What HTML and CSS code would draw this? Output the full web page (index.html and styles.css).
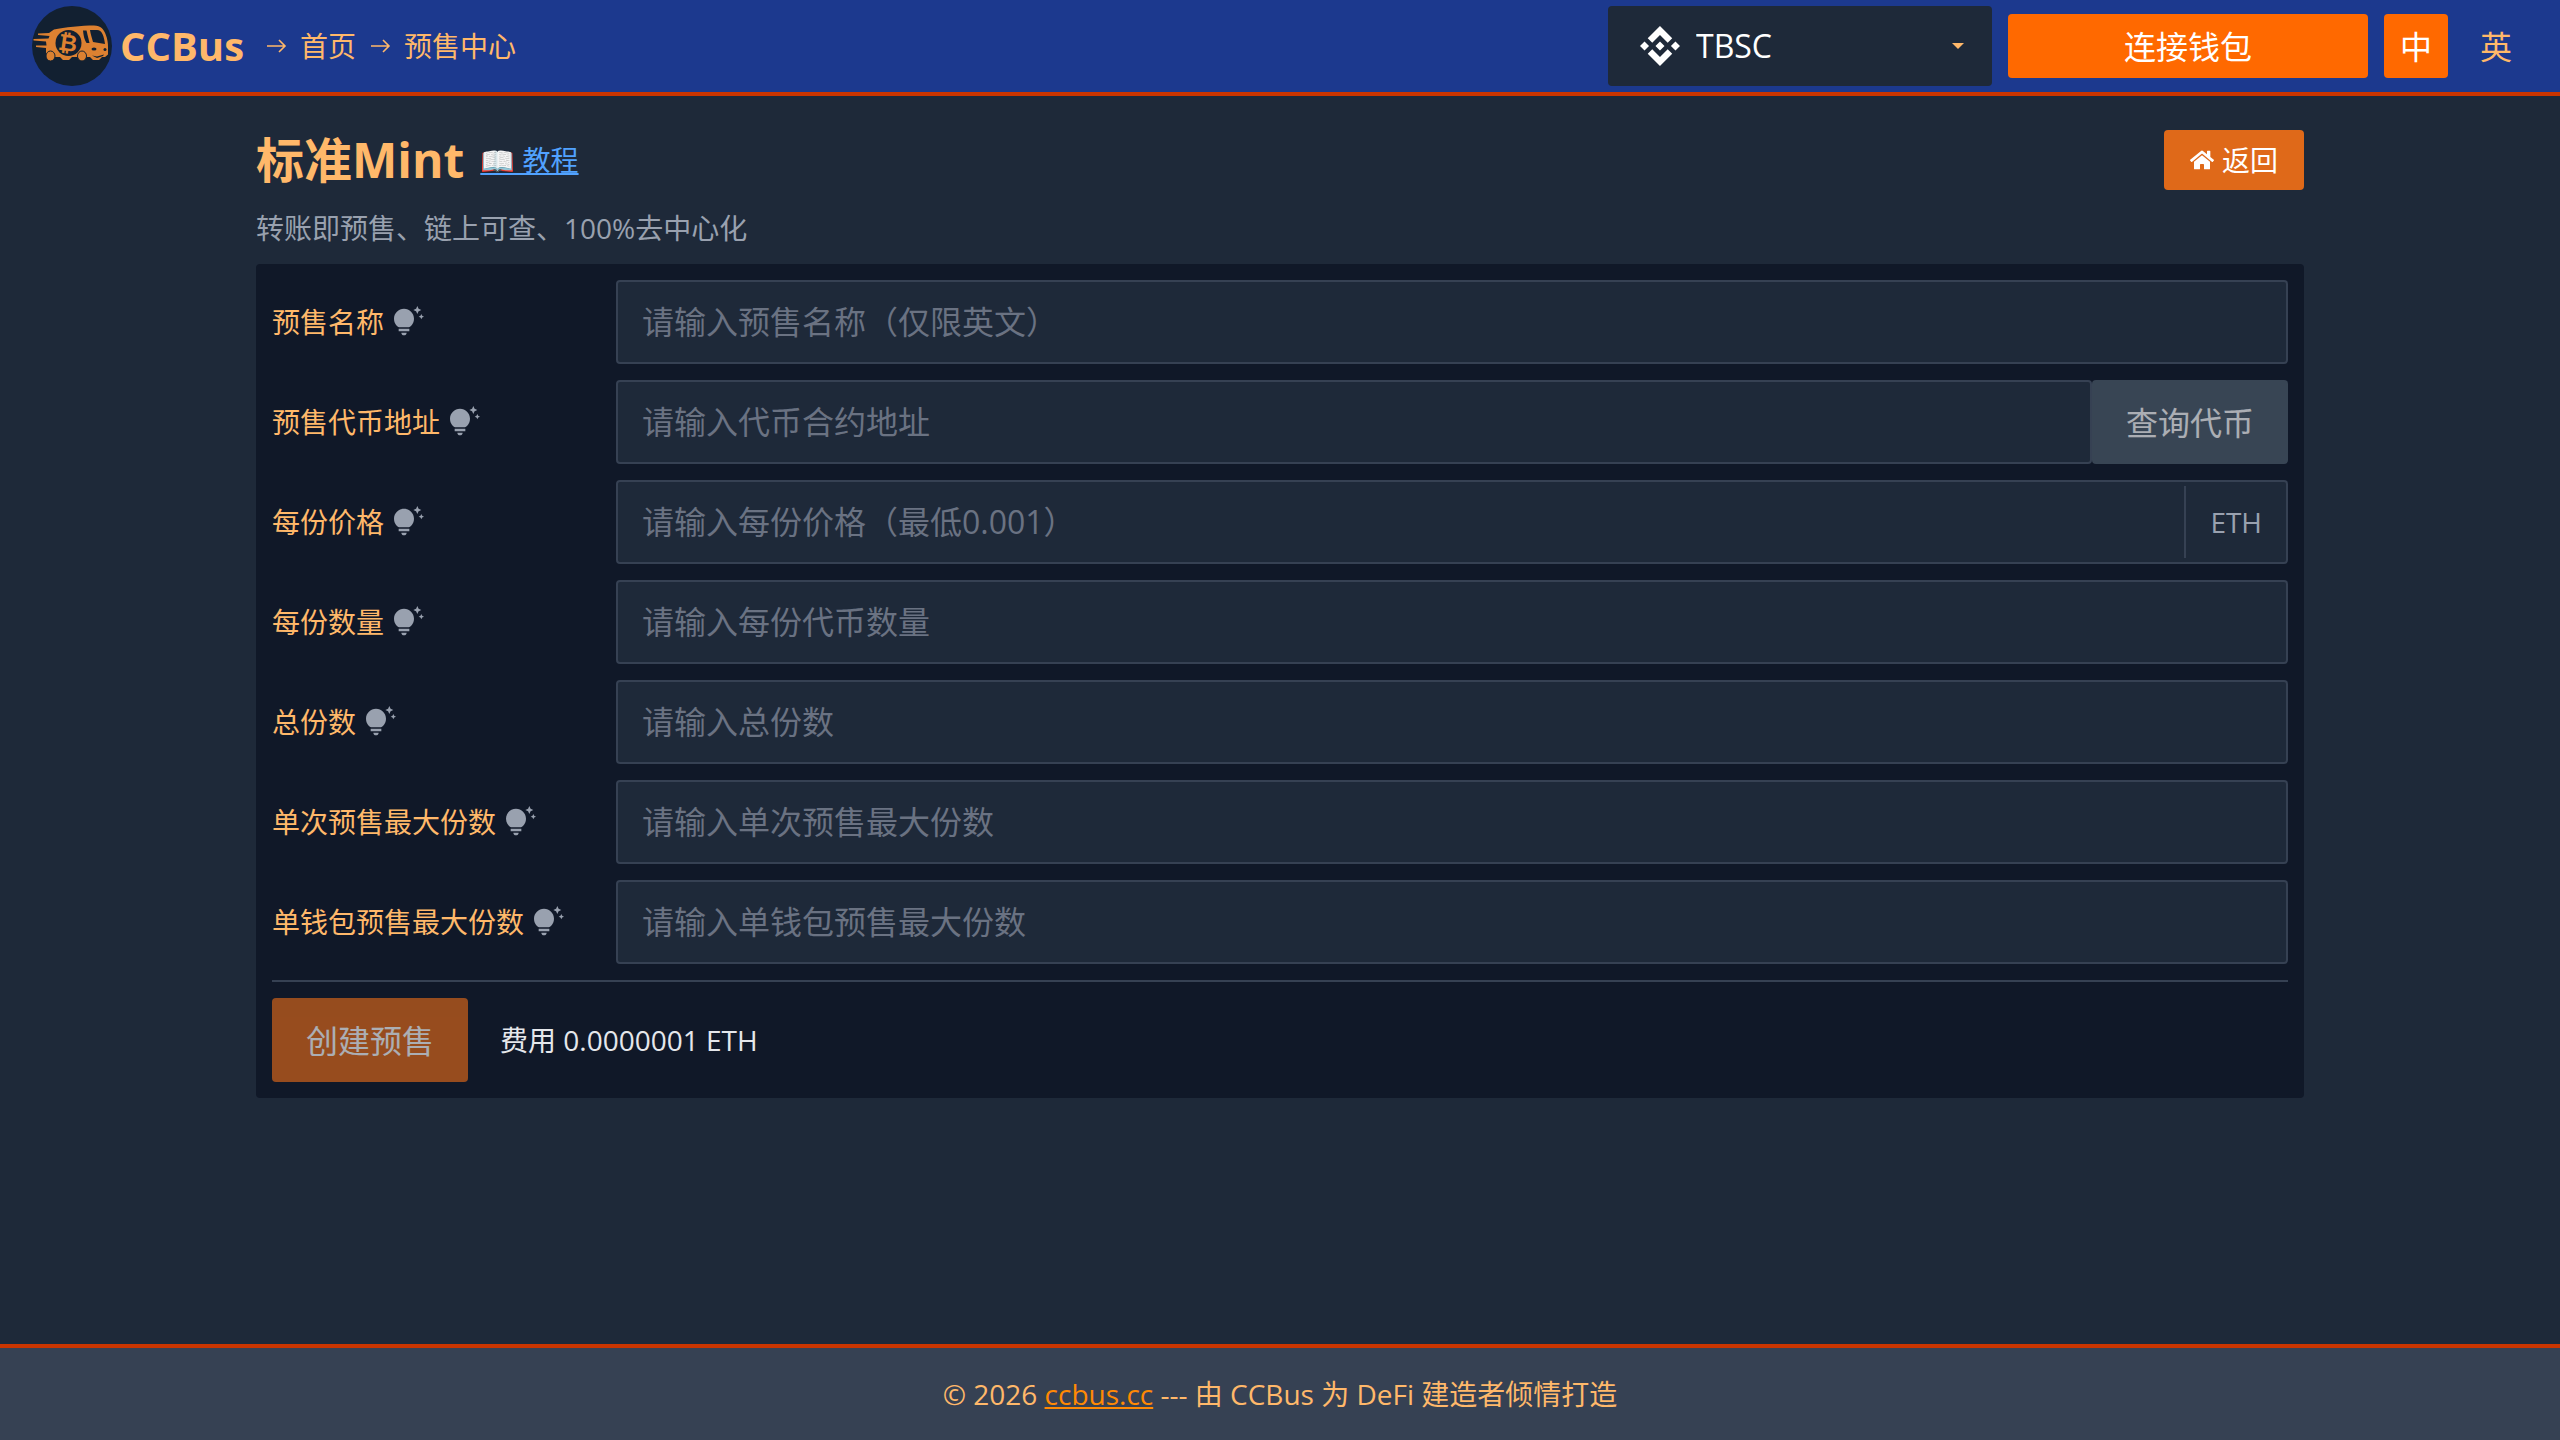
FILE: index.html
```html
<!DOCTYPE html>
<html lang="zh-CN">
<head>
    <meta charset="UTF-8">
    <meta name="viewport" content="width=device-width, initial-scale=1.0">
    <title>标准Mint - CCBus</title>
    <link rel="stylesheet" href="styles.css">
</head>
<body>
    <!-- 图标 -->
    <svg class="sprite" aria-hidden="true">
        <symbol id="icon-tip" viewBox="0 0 24 24">
            <path d="M7 20h4c0 1.1-.9 2-2 2s-2-.9-2-2zm-2-1h8v-2H5v2zm11.5-9.5c0 3.82-2.66 5.86-3.77 6.5H5.27c-1.11-.64-3.77-2.68-3.77-6.5C1.5 5.36 4.86 2 9 2s7.5 3.36 7.5 7.5zm4.87-2.13L20 8l1.37.63L22 10l.63-1.37L24 8l-1.37-.63L22 6l-.63 1.37zM19 6l.94-2.06L22 3l-2.06-.94L19 0l-.94 2.06L16 3l2.06.94L19 6z"/>
        </symbol>
        <symbol id="icon-arrow" viewBox="0 0 24 24">
            <path d="M3 12h17M15 6l6 6-6 6" fill="none" stroke="currentColor" stroke-width="1.6"/>
        </symbol>
    </svg>

    <!-- 顶部导航 -->
    <header class="header">
        <nav class="breadcrumb">
            <a href="#" class="brand">
                <svg class="logo" viewBox="0 0 80 80" aria-hidden="true">
                    <circle cx="40" cy="40" r="40" fill="#122031"/>
                    <g fill="#dd8131">
                        <path d="M6 27.500l11-.5 5-3.500c10-2 28-4 40-4 7 0 9.500 4 11.500 8.500 2 5 2.500 9 2.500 13v7.500l-3 2.500h-3l-3 3h-6l-3-3H40l-3 3h-6l-3-3H15.500L14 48v-6l-10-1v-1.500h10.500l-.5-4-12.500-1V33l15-.5 1-2.500-11.500-1z"/>
                        <ellipse cx="18.500" cy="50" rx="4.500" ry="5" stroke="#122031"/>
                        <ellipse cx="50" cy="50" rx="4.500" ry="5" stroke="#122031"/>
                    </g>
                    <g fill="#122031">
                        <circle cx="36.500" cy="37" r="13"/>
                        <path d="M51 24.500h3.500l3 12.500h-3c-2-3-3-7-3.500-12.500z"/>
                        <path d="M58 24h7c5 0 7 6 8 14l-12-2c-1-4-2.500-8-3-12z"/>
                        <ellipse cx="62" cy="43" rx="2.500" ry="1.500"/>
                        <ellipse cx="73" cy="43.500" rx="1.500" ry="1.500"/>
                        <path d="M60 49.500l5 1 7-2-1 1.500-6 2z"/>
                    </g>
                    <text class="logo-coin" x="36" y="45" transform="rotate(8 36 37)">₿</text>
                </svg>
                <span class="brand-name">CCBus</span>
            </a>
            <svg class="arrow"><use href="#icon-arrow"/></svg>
            <a href="#" class="crumb">首页</a>
            <svg class="arrow"><use href="#icon-arrow"/></svg>
            <a href="#" class="crumb">预售中心</a>
        </nav>
        <div class="header-actions">
            <div class="chain">
                <svg class="chain-icon" viewBox="0 0 24 24" aria-hidden="true">
                    <path d="M16.624 13.9202l2.7175 2.7154-7.353 7.353-7.353-7.352 2.7175-2.7164 4.6355 4.6595 4.6356-4.6595zm4.6366-4.6366L24 12l-2.7154 2.7164L18.5682 12l2.6924-2.7164zm-9.272.001l2.7163 2.6914-2.7164 2.7174v-.001L9.2721 12l2.7164-2.7154zm-9.2722-.001L5.4088 12l-2.6914 2.6924L0 12l2.7164-2.7164zM11.9885.0115l7.353 7.329-2.7174 2.7154-4.6356-4.6356-4.6355 4.6595-2.7174-2.7154 7.353-7.353z"/>
                </svg>
                <select class="chain-select" aria-label="网络">
                    <option>TBSC</option>
                </select>
                <svg class="chain-caret" viewBox="0 0 12 6" aria-hidden="true"><path d="M0 0h12L6 6z"/></svg>
            </div>
            <button type="button" class="connect-btn">连接钱包</button>
            <button type="button" class="lang-btn active">中</button>
            <button type="button" class="lang-btn">英</button>
        </div>
    </header>

    <!-- 主要内容 -->
    <main class="main-content">
        <div class="title-row">
            <h1 class="page-title">标准Mint</h1>
            <a href="#" class="guide-link">📖 教程</a>
            <a href="#" class="back-btn">
                <svg class="home-icon" viewBox="0 0 576 512" aria-hidden="true">
                    <path d="M280.37 148.26L96 300.11V464a16 16 0 0 0 16 16l112.06-.29a16 16 0 0 0 15.92-16V368a16 16 0 0 1 16-16h64a16 16 0 0 1 16 16v95.64a16 16 0 0 0 16 16.05L464 480a16 16 0 0 0 16-16V300L295.67 148.26a12.19 12.19 0 0 0-15.3 0zM571.6 251.47L488 182.56V44.05a12 12 0 0 0-12-12h-56a12 12 0 0 0-12 12v72.61L318.47 43a48 48 0 0 0-61 0L4.34 251.47a12 12 0 0 0-1.6 16.9l25.5 31A12 12 0 0 0 45.15 301l235.22-193.74a12.19 12.19 0 0 1 15.3 0L530.9 301a12 12 0 0 0 16.9-1.6l25.5-31a12 12 0 0 0-1.7-16.93z"/>
                </svg>
                返回
            </a>
        </div>
        <p class="subtitle">转账即预售、链上可查、100%去中心化</p>

        <!-- 预售表单 -->
        <form class="panel">
            <div class="form-row">
                <label for="name">预售名称 <svg class="tip"><use href="#icon-tip"/></svg></label>
                <input type="text" id="name" class="field" placeholder="请输入预售名称（仅限英文）">
            </div>
            <div class="form-row">
                <label for="token">预售代币地址 <svg class="tip"><use href="#icon-tip"/></svg></label>
                <div class="field-group">
                    <input type="text" id="token" class="field" placeholder="请输入代币合约地址">
                    <button type="button" class="btn query-btn" disabled>查询代币</button>
                </div>
            </div>
            <div class="form-row">
                <label for="price">每份价格 <svg class="tip"><use href="#icon-tip"/></svg></label>
                <div class="field-group with-unit">
                    <input type="text" id="price" class="field" placeholder="请输入每份价格（最低0.001）">
                    <span class="unit">ETH</span>
                </div>
            </div>
            <div class="form-row">
                <label for="amount">每份数量 <svg class="tip"><use href="#icon-tip"/></svg></label>
                <input type="text" id="amount" class="field" placeholder="请输入每份代币数量">
            </div>
            <div class="form-row">
                <label for="total">总份数 <svg class="tip"><use href="#icon-tip"/></svg></label>
                <input type="text" id="total" class="field" placeholder="请输入总份数">
            </div>
            <div class="form-row">
                <label for="maxOnce">单次预售最大份数 <svg class="tip"><use href="#icon-tip"/></svg></label>
                <input type="text" id="maxOnce" class="field" placeholder="请输入单次预售最大份数">
            </div>
            <div class="form-row">
                <label for="maxWallet">单钱包预售最大份数 <svg class="tip"><use href="#icon-tip"/></svg></label>
                <input type="text" id="maxWallet" class="field" placeholder="请输入单钱包预售最大份数">
            </div>
            <div class="form-footer">
                <button type="submit" class="btn create-btn" disabled>创建预售</button>
                <span class="fee">费用 0.0000001 ETH</span>
            </div>
        </form>
    </main>

    <!-- 页脚 -->
    <footer class="footer">
        <p>© 2026 <a href="#">ccbus.cc</a> --- 由 CCBus 为 DeFi 建造者倾情打造</p>
    </footer>
</body>
</html>
```
FILE: styles.css
```css
:root {
    --bg: #1e2939;
    --panel: #101828;
    --line: #364153;
    --text: #ffb86a;
    --muted: #99a1af;
    --orange: #ff6900;
    --orange-dark: #ca3500;
    --accent: #df6919;
}
* {
    box-sizing: border-box;
}
body {
    margin: 0;
    min-height: 100vh;
    display: flex;
    flex-direction: column;
    font-family: "Open Sans", "Noto Sans CJK SC", sans-serif;
    font-size: 28px;
    line-height: 40px;
    background: var(--bg);
    color: var(--text);
}
h1, p {
    margin: 0;
}
input, button, select {
    font-family: inherit;
    font-size: 32px;
}
.sprite {
    position: absolute;
    width: 0;
    height: 0;
}
/* 顶部导航 */
.header {
    display: flex;
    justify-content: space-between;
    align-items: center;
    padding: 6px 32px;
    background: #1c398e;
    border-bottom: 4px solid var(--orange-dark);
}
.breadcrumb {
    display: flex;
    align-items: center;
    gap: 12px;
}
.brand {
    display: flex;
    align-items: center;
    gap: 8px;
    margin-right: 8px;
    color: var(--text);
    text-decoration: none;
}
.brand-name {
    font-size: 40px;
    font-weight: 700;
}
.logo {
    width: 80px;
    height: 80px;
}
.logo-coin {
    font-size: 23px;
    font-weight: 700;
    text-anchor: middle;
    fill: #dd8131;
}
.arrow {
    width: 24px;
    height: 24px;
}
.crumb {
    color: var(--text);
    text-decoration: none;
}
.header-actions {
    display: flex;
    align-items: center;
    gap: 16px;
}
.chain {
    position: relative;
    width: 384px;
}
.chain-select {
    display: block;
    width: 100%;
    height: 80px;
    padding: 0 88px 2px;
    appearance: none;
    border: none;
    border-radius: 4px;
    background: var(--bg);
    color: #fff;
}
.chain-icon {
    position: absolute;
    left: 32px;
    top: 20px;
    width: 40px;
    height: 40px;
    fill: #fff;
    pointer-events: none;
}
.chain-caret {
    position: absolute;
    right: 28px;
    top: 37px;
    width: 12px;
    height: 6px;
    fill: var(--text);
    pointer-events: none;
}
.connect-btn,
.lang-btn {
    height: 64px;
    padding: 0 0 2px;
    border: none;
    border-radius: 4px;
    background: var(--orange);
    color: #fff;
    cursor: pointer;
}
.connect-btn {
    width: 360px;
}
.lang-btn {
    width: 64px;
}
.lang-btn:not(.active) {
    background: transparent;
    color: var(--text);
}
/* 主要内容 */
.main-content {
    flex: 1;
    width: 80%;
    margin: 0 auto;
    padding: 32px 0;
}
.title-row {
    display: flex;
    align-items: center;
    gap: 16px;
    height: 64px;
}
.page-title {
    font-size: 48px;
    line-height: 64px;
}
.guide-link {
    color: #51a2ff;
}
.back-btn {
    display: flex;
    align-items: center;
    gap: 8px;
    height: 60px;
    margin-left: auto;
    padding: 0 26px;
    border-radius: 4px;
    background: var(--accent);
    color: #fff;
    text-decoration: none;
}
.home-icon {
    width: 24px;
    height: 24px;
    fill: currentColor;
}
.subtitle {
    margin: 16px 0;
    color: var(--muted);
}
/* 表单 */
.panel {
    display: flex;
    flex-direction: column;
    gap: 16px;
    padding: 16px;
    border-radius: 4px;
    background: var(--panel);
}
.form-row {
    display: grid;
    grid-template-columns: 328px 1fr;
    gap: 16px;
    align-items: center;
}
.form-row label {
    display: flex;
    align-items: center;
    gap: 8px;
}
.tip {
    width: 32px;
    height: 32px;
    fill: var(--muted);
}
.field {
    width: 100%;
    height: 84px;
    padding: 0 24px 2px;
    border: 2px solid var(--line);
    border-radius: 4px;
    outline: none;
    background: var(--bg);
    color: #fff;
}
.field::placeholder {
    color: #6a7282;
}
.field:focus {
    border-color: var(--orange);
}
.field-group {
    display: flex;
    align-items: center;
}
.field-group .field {
    flex: 1;
}
.with-unit {
    border: 2px solid var(--line);
    border-radius: 4px;
    background: var(--bg);
}
.with-unit .field {
    height: 80px;
    border: none;
}
.unit {
    padding: 16px 24px;
    border-left: 2px solid var(--line);
    color: var(--muted);
}
.btn {
    height: 84px;
    padding: 0 34px 2px;
    border: none;
    border-radius: 4px;
    color: #fff;
}
.btn:disabled {
    opacity: 0.65;
}
.query-btn {
    background: #4e5d6c;
}
.create-btn {
    background: var(--accent);
}
.form-footer {
    display: flex;
    align-items: center;
    gap: 32px;
    padding-top: 16px;
    border-top: 2px solid var(--line);
}
.fee {
    color: #e5e7eb;
}
/* 页脚 */
.footer {
    padding: 26px 32px;
    border-top: 4px solid var(--orange-dark);
    background: var(--line);
    text-align: center;
}
.footer a {
    color: #ff8904;
}
```
